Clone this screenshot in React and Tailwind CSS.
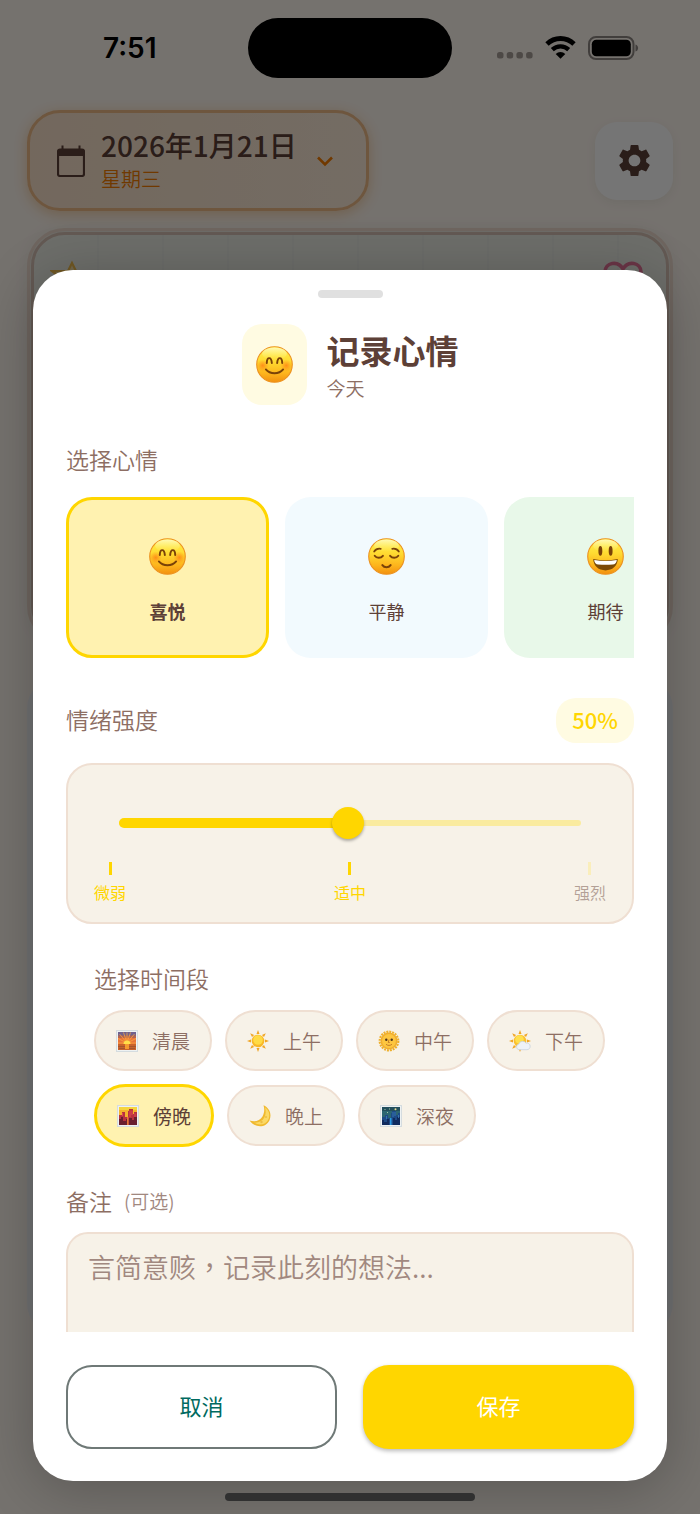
import React, { useId, useState } from "react";

function FaceBase({ children, size = 37 }) {
  const id = useId();
  return (
    <svg width={size} height={size} viewBox="0 0 36 36" aria-hidden="true">
      <defs>
        <linearGradient id={id + "a"} x1="0" y1="0" x2="0" y2="1">
          <stop offset="0" stopColor="#fff04e" />
          <stop offset="0.4" stopColor="#ffdc32" />
          <stop offset="0.75" stopColor="#fdb41c" />
          <stop offset="1" stopColor="#f2900f" />
        </linearGradient>
        <radialGradient id={id + "b"}>
          <stop offset="0" stopColor="#ff7a12" stopOpacity="0.75" />
          <stop offset="1" stopColor="#ff8a12" stopOpacity="0" />
        </radialGradient>
        <linearGradient id={id + "c"} x1="0" y1="0" x2="0" y2="1">
          <stop offset="0" stopColor="#fffbd0" stopOpacity="0.8" />
          <stop offset="1" stopColor="#fff78a" stopOpacity="0" />
        </linearGradient>
      </defs>
      <circle cx="18" cy="18" r="17.3" fill={`url(#${id}a)`} stroke="#ec9220" strokeWidth="1.1" />
      <ellipse cx="18" cy="7.5" rx="12" ry="6" fill={`url(#${id}c)`} />
      {children(`url(#${id}b)`)}
    </svg>
  );
}

function SmileFace() {
  return (
    <FaceBase>
      {(blush) => (
        <>
          <circle cx="6.500" cy="19" r="6" fill={blush} />
          <circle cx="29.500" cy="19" r="6" fill={blush} />
          <g fill="none" stroke="#7a4208" strokeLinecap="round">
            <path d="M10.500 16.500c.2-6.300 4.400-6.300 4.900 0M20.600 16.500c.5-6.300 4.700-6.300 4.900 0" strokeWidth="1.900" />
            <path d="M9.600 22.800c4 5 12.800 5 16.800 0" strokeWidth="1.900" />
          </g>
        </>
      )}
    </FaceBase>
  );
}

function CalmFace() {
  return (
    <FaceBase>
      {() => (
        <g fill="none" stroke="#7a4208" strokeLinecap="round">
          <path d="M6 13.200c1.600-2.400 3.800-3.200 6.400-2.700M30 13.200c-1.600-2.400-3.800-3.200-6.400-2.700" strokeWidth="1.700" />
          <path d="M6.500 17.300c1.800 2.500 6 2.500 8 0M21.500 17.300c2 2.500 6.200 2.500 8 0" strokeWidth="1.900" />
          <path d="M14 26.300c2 2.800 6 2.800 8 0" strokeWidth="2" />
        </g>
      )}
    </FaceBase>
  );
}

function GrinFace() {
  return (
    <FaceBase>
      {() => (
        <>
          <ellipse cx="13" cy="12.600" rx="1.900" ry="4.700" fill="#7a4208" />
          <ellipse cx="23" cy="12.600" rx="1.900" ry="4.700" fill="#7a4208" />
          <path d="M6 20.500c8 1.800 16 1.800 24 0-.4 7-5.400 11-12 11S6.400 27.500 6 20.500z" fill="#7c4a06" />
          <path d="M7 21.300c7.300 1.500 14.700 1.500 22 0-.3 3-1.700 4.200-4 4.400-4.600.5-9.400.5-14 0-2.300-.2-3.700-1.400-4-4.400z" fill="#fff" />
        </>
      )}
    </FaceBase>
  );
}

const RAYS = [0, 45, 90, 135, 180, 225, 270, 315];

function PhotoFrame({ children }) {
  return (
    <svg width="22" height="22" viewBox="0 0 22 22" aria-hidden="true">
      <rect x="0.5" y="0.5" width="21" height="21" fill="#eef2f3" stroke="#d5dcdf" />
      {children}
    </svg>
  );
}

function SunriseIcon() {
  return (
    <PhotoFrame>
      <rect x="2" y="2" width="18" height="18" fill="#e8743a" />
      <path d="M2 2h18v4H2z" fill="#70618d" />
      <path d="M2 5.500h18V8H2z" fill="#b5644f" />
      <path
        d="M11 13L3.500 4M11 13L7.500 2.500M11 13V2.500M11 13l3.500-10.500M11 13l7.500-9M11 13L2 8.500M11 13l9-4.500M11 13H2M11 13h9"
        stroke="#ffae3d"
        strokeWidth="0.7"
      />
      <path d="M2 14h18v6H2z" fill="#c8622b" />
      <path d="M2 16.500h18M3 18.500h16" stroke="#9c5230" strokeWidth="0.8" />
      <path d="M7.500 14a3.500 3.500 0 017 0z" fill="#ffe04a" />
      <path d="M9 14h4v5H9z" fill="#f59a30" />
    </PhotoFrame>
  );
}

function SunIcon() {
  return (
    <svg width="22" height="22" viewBox="0 0 22 22" aria-hidden="true">
      {RAYS.map((a) => (
        <path key={a} d="M11 0l1.500 4h-3z" fill="#f0a524" transform={`rotate(${a} 11 11)`} />
      ))}
      <circle cx="11" cy="11" r="6.300" fill="#f9b828" />
      <circle cx="11" cy="10" r="4.800" fill="#ffdb45" />
    </svg>
  );
}

function SunFaceIcon() {
  return (
    <svg width="22" height="22" viewBox="0 0 22 22" aria-hidden="true">
      <circle cx="11" cy="11" r="9.300" fill="none" stroke="#eeb02d" strokeWidth="2.200" strokeDasharray="2 0.920" />
      <circle cx="11" cy="11" r="8.500" fill="#f0ae2e" />
      <circle cx="11" cy="11" r="6.900" fill="#fdc640" />
      <circle cx="8.300" cy="9.700" r="1.200" fill="#50351d" />
      <circle cx="13.700" cy="9.700" r="1.200" fill="#50351d" />
      <path d="M11 9.500l-.7 3h1.400M8 14.300c1.800 1.500 4.200 1.500 6 0" fill="none" stroke="#bd7427" strokeWidth="0.9" />
    </svg>
  );
}

function SunCloudIcon() {
  return (
    <svg width="22" height="22" viewBox="0 0 22 22" aria-hidden="true">
      {RAYS.map((a) => (
        <path key={a} d="M11 0l1.500 4h-3z" fill="#f0a524" transform={`rotate(${a} 11 11)`} />
      ))}
      <circle cx="11" cy="11" r="6.300" fill="#fbc02f" />
      <circle cx="10.500" cy="9.500" r="4.300" fill="#ffe04e" />
      <path
        d="M10 19.700a2.900 2.900 0 01-.2-5.700 4.100 4.100 0 017.300-.8 3.300 3.300 0 11.900 6.500z"
        fill="#eef2f7"
        stroke="#c3cedb"
        strokeWidth="0.700"
      />
    </svg>
  );
}

function DuskIcon() {
  return (
    <PhotoFrame>
      <rect x="2" y="2" width="18" height="18" fill="#f5b32b" />
      <path d="M2 2h18v3H2z" fill="#f6d53d" />
      <path d="M2 20V10h3V7h3v5h3V6h1V4h4v5h1V7h3v13z" fill="#b8323f" />
      <path d="M2 20v-6h2v-2h2v4h3v-2h1v6zM12 20v-7h3v2h2v-3h3v8z" fill="#6a1f2f" />
      <path d="M5.500 8v3M13 5.500V12M15 5.500V10M18 8.500V12" stroke="#e8515a" strokeWidth="0.8" />
      <path d="M10.200 12h1.200v8h-1.200z" fill="#f08a35" />
    </PhotoFrame>
  );
}

function MoonIcon() {
  return (
    <svg width="22" height="22" viewBox="0 0 22 22" aria-hidden="true">
      <path d="M14.500 0.300C20.500 3 23 9 20.500 15.200 17.300 22.400 7 24 0.500 15.500c5.200 1.800 10.400.6 13-4 2-3.600 2.200-7.500 1-11.200z" fill="#f0b92e" />
      <path d="M16 2.200c4 3 5.300 7.400 3.600 11.800-2.400 5.600-9.200 7.300-14.600 3.600 4.700.3 8.500-1.500 10.300-5 1.600-3.200 1.800-6.700.7-10.400z" fill="#fbd965" />
      <circle cx="17" cy="12" r="1" fill="#edbd45" />
      <circle cx="12.500" cy="17" r="1.200" fill="#edbd45" />
    </svg>
  );
}

function NightIcon() {
  return (
    <PhotoFrame>
      <rect x="2" y="2" width="18" height="18" fill="#2c6672" />
      <path d="M2 2h18v4H2z" fill="#234f5c" />
      <path d="M2 20v-8h3v-2h3v3h3V8h1V6h4v4h2V8h2v12z" fill="#1d4a86" />
      <path d="M2 20v-5h2v2h3v-3h2v6zM13 20v-7h2v2h2v-3h3v8z" fill="#102b5e" />
      <path d="M6.500 11v3M13 7v5M15 7v4M18.500 10v3" stroke="#3c82b7" strokeWidth="0.8" />
      <path d="M10 13h1.500v7H10z" fill="#2b9be4" />
      <circle cx="15.500" cy="4.200" r="1" fill="#e7dd96" />
      <path d="M4.500 4h1v1h-1zM9 3.500h1v1H9zM7 7h1v1H7z" fill="#9cc6a4" />
    </PhotoFrame>
  );
}

function StatusBar() {
  return (
    <div className="grid grid-cols-3 items-center h-24">
      <div className="pl-[103px] font-['Inter',sans-serif] text-[28px] leading-8 font-semibold text-black">7:51</div>
      <div className="justify-self-center w-51 h-15 rounded-full bg-black" />
      <div className="flex items-center justify-end gap-3 pr-[61px]">
        <svg width="36" height="24" viewBox="0 0 36 24" fill="#a89f99" aria-hidden="true">
          <rect x="0" y="16" width="6.500" height="6.500" rx="2.500" />
          <rect x="9.700" y="16" width="6.500" height="6.500" rx="2.500" />
          <rect x="19.400" y="16" width="6.500" height="6.500" rx="2.500" />
          <rect x="29.100" y="16" width="6.500" height="6.500" rx="2.500" />
        </svg>
        <svg width="31" height="24" viewBox="0 0 31 24" fill="none" stroke="#000" aria-hidden="true">
          <path d="M2 8a19.300 19.300 0 0127 0" strokeWidth="4.800" />
          <path d="M7.300 13.600a12 12 0 0116.400 0" strokeWidth="4.300" />
          <path d="M15.500 22.800l-4.800-4.900a6.800 6.800 0 019.600 0z" fill="#000" stroke="none" />
        </svg>
        <svg width="51" height="24" viewBox="0 0 51 24" aria-hidden="true">
          <rect x="1" y="1" width="44.500" height="22" rx="7" fill="none" stroke="#8f8884" strokeWidth="2" />
          <rect x="3.800" y="3.800" width="39" height="16.400" rx="4.500" fill="#000" />
          <path d="M47.500 8.500c3.500 1 3.500 6 0 7z" fill="#8f8884" />
        </svg>
      </div>
    </div>
  );
}

function JournalPage() {
  return (
    <div className="[grid-area:1/1] min-h-0 overflow-hidden bg-[#fff8f0]" aria-hidden="true">
      <StatusBar />
      <div className="flex items-center justify-between px-[27px] pt-[14px]">
        <button
          type="button"
          tabIndex={-1}
          className="flex items-center h-[101px] rounded-[33px] border-[3px] border-[#efbb88] bg-linear-to-r from-[#fae2cb] to-[#fcecd9] pl-[27px] pr-[29px] text-left shadow-[0_3px_14px_#f5cfa6]"
        >
          <svg width="28" height="32" viewBox="0 0 28 32" aria-hidden="true" className="mr-4">
            <path d="M3 4.500h22a2 2 0 012 2V29a2 2 0 01-2 2H3a2 2 0 01-2-2V6.500a2 2 0 012-2z" fill="none" stroke="#5d4037" strokeWidth="2.200" />
            <path d="M1 5h26v6H1zM4.500 0.500h2V5h-2zM21.500 0.500h2V5h-2z" fill="#5d4037" />
          </svg>
          <span className="flex flex-col">
            <span className="text-[28px] leading-9 font-medium text-[#5d4037]">2026年1月21日</span>
            <span className="text-xl leading-8 font-[350] text-[#f57c00]">星期三</span>
          </span>
          <svg width="24" height="24" viewBox="0 0 24 24" fill="none" stroke="#f57c00" strokeWidth="2.600" aria-hidden="true" className="ml-4">
            <path d="M5 8.500l7 7 7-7" />
          </svg>
        </button>
        <button
          type="button"
          tabIndex={-1}
          aria-label="设置"
          className="grid place-items-center size-[78px] rounded-[22px] bg-white shadow-[0_3px_12px_rgba(0,0,0,0.06)]"
        >
          <svg width="39" height="39" viewBox="0 0 24 24" fill="#5d4037" aria-hidden="true">
            <path d="M19.140 12.940c.04-.3.06-.61.06-.94 0-.32-.02-.64-.07-.94l2.030-1.580c.18-.14.23-.41.12-.61l-1.920-3.320c-.12-.22-.37-.29-.59-.22l-2.390.96c-.5-.38-1.030-.7-1.620-.94l-.36-2.540c-.04-.24-.24-.41-.48-.41h-3.840c-.24 0-.43.17-.47.41l-.36 2.540c-.59.24-1.130.57-1.620.94l-2.390-.96c-.22-.08-.47 0-.59.22L2.740 8.870c-.12.21-.08.47.12.61l2.030 1.580c-.05.3-.09.63-.09.94s.02.64.07.94l-2.030 1.580c-.18.14-.23.41-.12.61l1.920 3.320c.12.22.37.29.59.22l2.390-.96c.5.38 1.030.7 1.620.94l.36 2.540c.05.24.24.41.48.41h3.840c.24 0 .44-.17.47-.41l.36-2.540c.59-.24 1.130-.56 1.620-.94l2.390.96c.22.08.47 0 .59-.22l1.920-3.320c.12-.22.07-.47-.12-.61l-2.010-1.580zM12 15.600c-1.980 0-3.600-1.620-3.600-3.600s1.620-3.600 3.600-3.600 3.600 1.620 3.600 3.600-1.620 3.600-3.600 3.600z" />
          </svg>
        </button>
      </div>
      <div className="mx-[27px] mt-[17px] rounded-[38px] border-[3px] border-[#efdcd0] bg-[#eeeae0] p-px shadow-[0_0_16px_rgba(0,0,0,0.05)]">
        <div className="flex items-start justify-between h-[408px] rounded-[34px] border-[3px] border-[#d8c2b5] pt-6 pr-[21px] pl-4 bg-[#eef0e8] bg-[linear-gradient(to_right,transparent_63px,#e9ebe4_63px)] bg-size-[65px_100%]">
          <svg width="44" height="42" viewBox="0 0 44 42" fill="#f9e2a8" stroke="#f2bd4c" strokeWidth="2.200" aria-hidden="true">
            <path d="M22 4l4 8h16L30 21l5 16-13-9-13 9 5-16L2 12h16z" />
          </svg>
          <svg width="44" height="40" viewBox="0 0 44 40" fill="none" stroke="#e8749a" strokeWidth="3.600" aria-hidden="true">
            <path d="M22 37C10 27 4 20 4 13 4 3.500 17 1 22 10 27 1 40 3.500 40 13c0 7-6 14-18 24z" />
          </svg>
        </div>
      </div>
      <div className="mx-[27px] mt-8 h-[660px] rounded-[33px] bg-[#f2f4f7]" />
    </div>
  );
}

const MOODS = [
  { name: "喜悦", Icon: SmileFace, tone: "bg-[#fffbe2]" },
  { name: "平静", Icon: CalmFace, tone: "bg-[#f2fafe]" },
  { name: "期待", Icon: GrinFace, tone: "bg-[#e8f8e9]" },
];

const PERIODS = [
  { name: "清晨", Icon: SunriseIcon },
  { name: "上午", Icon: SunIcon },
  { name: "中午", Icon: SunFaceIcon },
  { name: "下午", Icon: SunCloudIcon },
  { name: "傍晚", Icon: DuskIcon },
  { name: "晚上", Icon: MoonIcon },
  { name: "深夜", Icon: NightIcon },
];

const LEVELS = [
  { name: "微弱", at: 0 },
  { name: "适中", at: 49 },
  { name: "强烈", at: 100 },
];

function MoodPicker() {
  const [mood, setMood] = useState("喜悦");
  return (
    <section>
      <h2 className="text-[23px] leading-9 font-[350] text-[#8d6e63]">选择心情</h2>
      <div className="mt-5 flex gap-4 overflow-x-auto [scrollbar-width:none]">
        {MOODS.map(({ name, Icon, tone }) => (
          <button
            key={name}
            type="button"
            aria-pressed={mood === name}
            onClick={() => setMood(name)}
            className={`flex w-[203px] h-[161px] shrink-0 flex-col items-center justify-center gap-5 rounded-[26px] pt-[10px] text-lg leading-8 text-[#5d4037] ${
              mood === name ? "border-[3px] border-[#ffd600] bg-[#fff2b0] font-bold" : tone
            }`}
          >
            <Icon />
            {name}
          </button>
        ))}
      </div>
    </section>
  );
}

function IntensitySlider() {
  const [level, setLevel] = useState(49.5);
  return (
    <section className="mt-10">
      <div className="flex items-start justify-between">
        <label htmlFor="intensity" className="text-[23px] leading-[42px] font-[350] text-[#8d6e63]">
          情绪强度
        </label>
        <output
          htmlFor="intensity"
          className="h-[45px] rounded-[20px] bg-[#fffbe2] px-4 text-[22px] leading-[43px] font-medium text-[#ffd600]"
        >
          {Math.round(level)}%
        </output>
      </div>
      <div className="mt-5 h-[161px] rounded-[26px] border-2 border-[#efdfd2] bg-[#f7f2e8] px-[26px] pt-[42px]">
        <div className="relative mx-[25px] flex h-8 items-center">
          <div className="h-[6px] w-full rounded-full bg-[#faeb9f]" />
          <div className="absolute left-0 h-[10px] rounded-full bg-[#ffd600]" style={{ width: `${level}%` }} />
          <input
            id="intensity"
            type="range"
            min="0"
            max="100"
            step="0.5"
            value={level}
            onChange={(e) => setLevel(Number(e.target.value))}
            className="absolute -inset-x-4 h-8 appearance-none bg-transparent [&::-webkit-slider-thumb]:size-8 [&::-webkit-slider-thumb]:appearance-none [&::-webkit-slider-thumb]:rounded-full [&::-webkit-slider-thumb]:bg-[#ffd600] [&::-webkit-slider-thumb]:shadow-[0_2px_3px_rgba(0,0,0,0.3)]"
          />
        </div>
        <div className="mt-[23px] flex justify-between">
          {LEVELS.map(({ name, at }) => (
            <div key={name} className="flex flex-col items-center">
              <span className={`h-[13px] w-[3px] ${level >= at ? "bg-[#ffd600]" : "bg-[#faeebb]"}`} />
              <span className={`mt-1 text-base leading-[26px] ${level >= at ? "text-[#ffd600]" : "font-[350] text-[#b3a096]"}`}>
                {name}
              </span>
            </div>
          ))}
        </div>
      </div>
    </section>
  );
}

function PeriodPicker() {
  const [period, setPeriod] = useState("傍晚");
  return (
    <section className="mx-7 mt-9">
      <h2 className="text-[23px] leading-9 font-[350] text-[#8d6e63]">选择时间段</h2>
      <div className="mt-[14px] flex flex-wrap items-center gap-[13px]">
        {PERIODS.map(({ name, Icon }) => (
          <button
            key={name}
            type="button"
            aria-pressed={period === name}
            onClick={() => setPeriod(name)}
            className={`flex items-center gap-[14px] rounded-full px-5 text-[19px] leading-[57px] ${
              period === name
                ? "border-[3px] border-[#ffd600] bg-[#fff2b0] text-[#5d4037]"
                : "border-2 border-[#efdfd2] bg-[#f7f2e8] font-[350] text-[#8d6e63]"
            }`}
          >
            <Icon />
            {name}
          </button>
        ))}
      </div>
    </section>
  );
}

function MoodDialog() {
  return (
    <div
      role="dialog"
      aria-labelledby="dialog-title"
      className="flex min-h-0 flex-1 flex-col rounded-[40px] bg-white px-[33px] pt-5 pb-8 shadow-[0_8px_56px_rgba(0,0,0,0.24)]"
    >
      <div className="h-2 w-[65px] shrink-0 self-center rounded-full bg-[#e0e0e0]" />
      <header className="mt-[26px] flex shrink-0 items-center justify-center gap-5">
        <div className="grid h-[81px] w-[65px] place-items-center rounded-[20px] bg-[#fffbe2]">
          <SmileFace />
        </div>
        <div>
          <h1 id="dialog-title" className="text-[33px] leading-[46px] font-bold text-[#5d4037]">
            记录心情
          </h1>
          <p className="text-[19px] leading-[30px] font-[350] text-[#8d6e63]">今天</p>
        </div>
      </header>
      <div className="mt-9 min-h-0 flex-1 overflow-y-auto [scrollbar-width:none]">
        <MoodPicker />
        <IntensitySlider />
        <PeriodPicker />
        <section className="mt-9">
          <label htmlFor="note" className="flex items-center gap-3 text-[23px] leading-9 font-[350] text-[#8d6e63]">
            备注 <span className="text-[19px] text-[#a1887f]">(可选)</span>
          </label>
          <textarea
            id="note"
            rows={4}
            lang="zh-Hant"
            placeholder="言简意赅，记录此刻的想法..."
            className="mt-[13px] block w-full resize-none rounded-[22px] border-2 border-[#efdfd2] bg-[#f7f2e8] px-5 py-3 font-['Noto_Sans_CJK_TC',sans-serif] text-[27px] leading-[42px] font-[350] text-[#5d4037] placeholder:text-[#a1887f]"
          />
        </section>
      </div>
      <footer className="mt-[33px] grid shrink-0 grid-cols-2 gap-[26px]">
        <button type="button" className="h-21 rounded-[26px] border-2 border-[#6f7977] pb-1 text-[22px] text-[#006a60]">
          取消
        </button>
        <button
          type="button"
          className="h-21 rounded-[26px] bg-[#ffd600] pb-1 text-[22px] text-white shadow-[0_2px_4px_rgba(0,0,0,0.28)]"
        >
          保存
        </button>
      </footer>
    </div>
  );
}

export default function App() {
  return (
    <div lang="zh-CN" className="grid h-screen grid-cols-1 grid-rows-1 font-['Noto_Sans_CJK_SC',sans-serif]">
      <JournalPage />
      <div className="z-10 flex min-h-0 flex-col bg-black/54 px-[33px] pt-[270px] [grid-area:1/1]">
        <MoodDialog />
        <div className="mt-3 mb-[13px] h-2 w-[250px] shrink-0 self-center rounded-full bg-[#303030]" />
      </div>
    </div>
  );
}
